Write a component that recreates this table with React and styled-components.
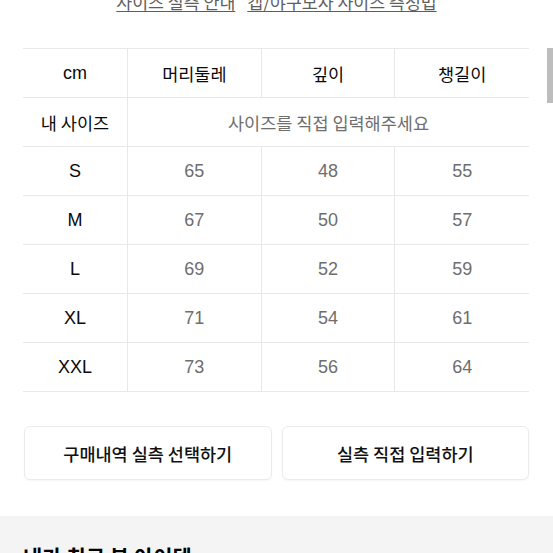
import React from "react";
import styled, { createGlobalStyle } from "styled-components";

const Global = createGlobalStyle`
  html, body { margin: 0; padding: 0; background: #fff; overflow: hidden; }
  body { font-family: "Liberation Sans", "Noto Sans CJK KR", sans-serif; color: #000; }
  * { box-sizing: border-box; }
`;

const Page = styled.div`
  position: relative;
  width: 553px;
  height: 553px;
  overflow: hidden;
  display: flex;
  flex-direction: column;
`;

const LinkRow = styled.div`
  margin-top: -9px;
  height: 22px;
  display: flex;
  justify-content: center;
  gap: 12px;
  font-family: "Noto Sans CJK KR", sans-serif;
  font-size: 17.3px;
  line-height: 22px;
`;

const GuideLink = styled.a`
  color: #5e5e5e;
  text-decoration: underline;
  text-underline-offset: 2px;
  text-decoration-thickness: 1px;
`;

const Content = styled.div`
  padding: 35px 24px 0 23px;
  display: flex;
  flex-direction: column;
`;

const Table = styled.div`
  display: grid;
  grid-template-columns: 105px 1fr 1fr 1fr;
  border-top: 1px solid #e8e8e8;
`;

const Cell = styled.div`
  height: 49px;
  display: flex;
  align-items: center;
  justify-content: center;
  border-bottom: 1px solid #e8e8e8;
  border-right: ${(p) => (p.$last ? "none" : "1px solid #e8e8e8")};
  grid-column: ${(p) => (p.$span ? `span ${p.$span}` : "auto")};
  font-family: ${(p) =>
    p.$ko ? `"Noto Sans CJK KR", sans-serif` : `"Liberation Sans", "Noto Sans CJK KR", sans-serif`};
  font-size: ${(p) => (p.$ko ? "17.5px" : "18px")};
  color: ${(p) => (p.$muted ? "#6e6e6e" : "#0a0a0a")};
`;

const ButtonRow = styled.div`
  margin-top: 34px;
  display: grid;
  grid-template-columns: 1fr 1fr;
  gap: 10px;
  padding-left: 1px;
`;

const ActionButton = styled.button`
  height: 54px;
  background: #fff;
  border: 1px solid #ebebeb;
  border-radius: 6px;
  box-shadow: 0 1px 2px rgba(0, 0, 0, 0.04);
  font-family: "Noto Sans CJK KR", sans-serif;
  font-size: 17.5px;
  font-weight: 500;
  color: #111;
  cursor: pointer;
`;

const Section = styled.div`
  margin-top: 36px;
  background: #f4f4f4;
  flex: 1;
  padding: 25px 24px 0 23px;
  display: flex;
  justify-content: space-between;
  align-items: flex-start;
`;

const SectionTitle = styled.h2`
  margin: 0;
  font-family: "Noto Sans CJK KR", sans-serif;
  font-size: 21px;
  font-weight: 700;
  line-height: 30px;
  color: #000;
`;

const MoreLink = styled.span`
  margin-top: 8px;
  font-family: "Noto Sans CJK KR", sans-serif;
  font-size: 15px;
  line-height: 22px;
  color: #c4c4c4;
`;

const ScrollThumb = styled.div`
  position: absolute;
  right: 0;
  top: 48px;
  width: 6px;
  height: 55px;
  background: #bdbdbd;
`;

const cols = ["머리둘레", "깊이", "챙길이"];
const rows = [
  ["S", 65, 48, 55],
  ["M", 67, 50, 57],
  ["L", 69, 52, 59],
  ["XL", 71, 54, 61],
  ["XXL", 73, 56, 64],
];

export default function App() {
  return (
    <>
      <Global />
      <Page>
        <LinkRow>
          <GuideLink>사이즈 실측 안내</GuideLink>
          <GuideLink>캡/야구모자 사이즈 측정법</GuideLink>
        </LinkRow>
        <Content>
          <Table>
            <Cell>cm</Cell>
            {cols.map((c, i) => (
              <Cell key={c} $ko $last={i === cols.length - 1}>
                {c}
              </Cell>
            ))}
            <Cell $ko>내 사이즈</Cell>
            <Cell $ko $muted $span={3} $last>
              사이즈를 직접 입력해주세요
            </Cell>
            {rows.map((r) =>
              r.map((v, i) => (
                <Cell key={r[0] + i} $muted={i > 0} $last={i === r.length - 1}>
                  {v}
                </Cell>
              ))
            )}
          </Table>
          <ButtonRow>
            <ActionButton>구매내역 실측 선택하기</ActionButton>
            <ActionButton>실측 직접 입력하기</ActionButton>
          </ButtonRow>
        </Content>
        <Section>
          <SectionTitle>내가 최근 본 아이템</SectionTitle>
          <MoreLink>전체보기</MoreLink>
        </Section>
        <ScrollThumb />
      </Page>
    </>
  );
}
